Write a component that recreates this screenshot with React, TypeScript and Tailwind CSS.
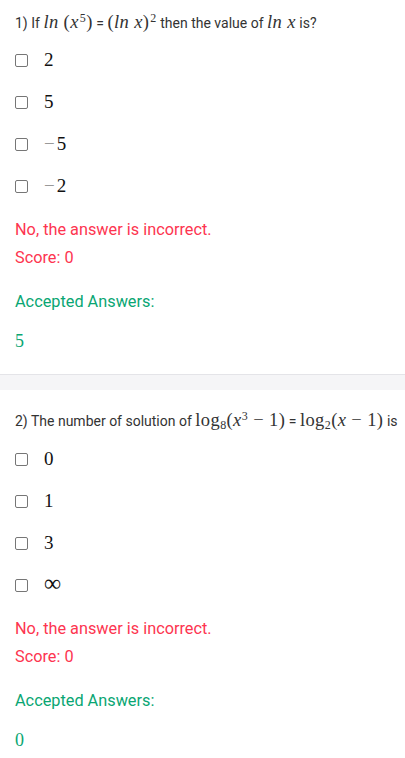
import React from "react";

const M = ({ children, className = "" }: { children: React.ReactNode; className?: string }) => (
  <span className={`font-['Liberation_Serif','DejaVu_Serif',serif] text-[18.5px] leading-[20px] tracking-[0.4px] ${className}`}>{children}</span>
);
const I = ({ children }: { children: React.ReactNode }) => <span className="italic">{children}</span>;

const Box = () => <span className="inline-block w-[13px] h-[13px] border border-[#767676] rounded-[2px] bg-white shrink-0" />;

const Opt = ({ children }: { children: React.ReactNode }) => (
  <div className="h-[42px] flex items-center pl-[15px]">
    <Box />
    <span className="ml-[16px] font-['Liberation_Serif','DejaVu_Serif',serif] text-[19px] text-[#111]">{children}</span>
  </div>
);

const Minus = () => <span className="text-[#999] mr-[2px]">−</span>;

const Feedback = ({ ans }: { ans: string }) => (
  <div className="pl-[15px] font-['Roboto',sans-serif]">
    <div className="mt-[9px] leading-[28px] text-[16.3px] text-[#fd3550]">No, the answer is incorrect.</div>
    <div className="leading-[28px] text-[16.3px] text-[#fd3550]">Score: 0</div>
    <div className="mt-[16px] leading-[28px] text-[16.3px] text-[#0aa673]">Accepted Answers:</div>
    <div className="mt-[11px] leading-[28px] text-[18px] text-[#0aa673] font-['Liberation_Serif',serif]">{ans}</div>
  </div>
);

export default function App() {
  return (
    <div className="w-[405px] min-h-[758px] bg-white font-['Roboto',sans-serif] text-[#333]">
      <div className="pt-[12px] pl-[15px] leading-[20px] text-[14px] h-[39px] whitespace-nowrap">
        1) If <M><I>ln</I> (<I>x</I><sup className="text-[12px] pl-[1px]">5</sup>)</M> = <M>(<I>ln x</I>)<sup className="text-[12px] pl-[1px]">2</sup></M> then the value of <M><I>ln x</I></M> is?
      </div>
      <Opt>2</Opt>
      <Opt>5</Opt>
      <Opt><Minus />5</Opt>
      <Opt><Minus />2</Opt>
      <Feedback ans="5" />
      <div className="mt-[19px] border-t border-[#e4e4e8] h-[16px] bg-[#f5f5f7]" />
      <div className="pt-[20px] pl-[15px] leading-[20px] text-[14px] h-[48px] whitespace-nowrap">
        2) The number of solution of <M>log<sub className="text-[12px]">8</sub>(<I>x</I><sup className="text-[12px]">3</sup> − 1)</M> = <M>log<sub className="text-[12px]">2</sub>(<I>x</I> − 1)</M> is
      </div>
      <Opt>0</Opt>
      <Opt>1</Opt>
      <Opt>3</Opt>
      <Opt><span className="text-[24px] leading-[20px]">∞</span></Opt>
      <Feedback ans="0" />
    </div>
  );
}
